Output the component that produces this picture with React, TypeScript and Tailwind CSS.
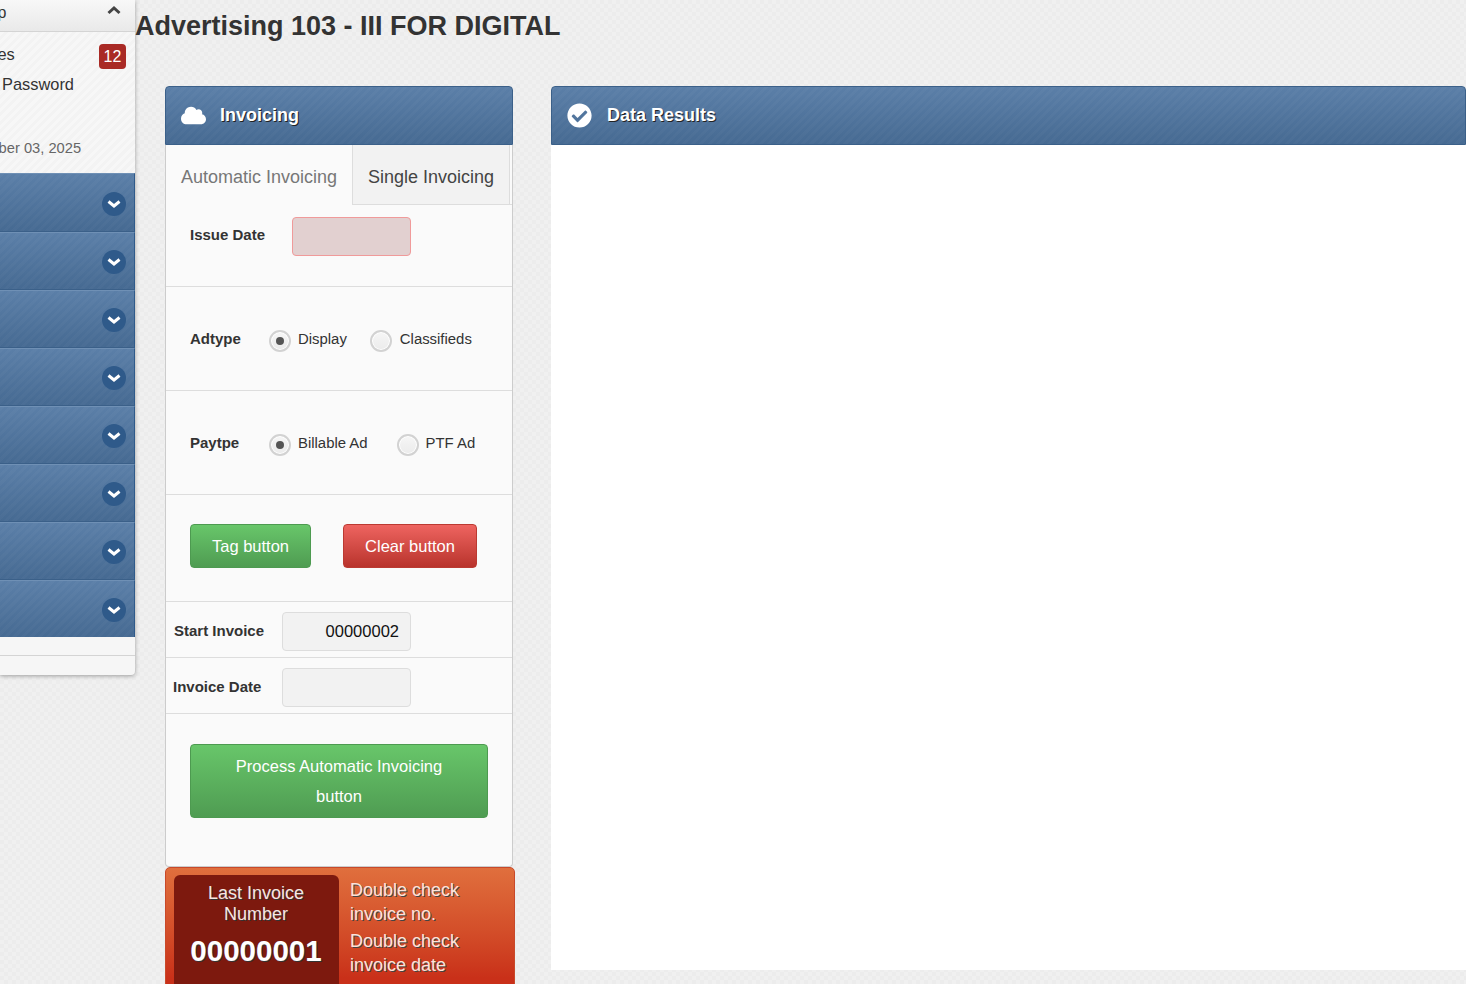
import { FaCloud, FaCheckCircle } from "react-icons/fa";

const stripes =
  "bg-[image:repeating-linear-gradient(135deg,rgba(255,255,255,0.025)_0,rgba(255,255,255,0.025)_3px,transparent_3px,transparent_6px),linear-gradient(180deg,#5b7fa8,#466a92)]";

function Chevron({ up = false, className = "" }: { up?: boolean; className?: string }) {
  return (
    <svg width="14" height="10" viewBox="0 0 14 10" className={className}>
      <polyline
        points={up ? "1.5,8 7,3 12.5,8" : "1.5,2.5 7,7 12.5,2.5"}
        fill="none"
        stroke="currentColor"
        strokeWidth="3"
      />
    </svg>
  );
}

function Radio({ checked = false }: { checked?: boolean }) {
  return (
    <span className="flex h-[22px] w-[22px] shrink-0 items-center justify-center rounded-full border-2 border-[#d2d2d2] bg-gradient-to-b from-[#f6f6f6] to-[#ebebeb] shadow-[inset_0_0_0_1px_#fff]">
      {checked && <span className="h-2 w-2 rounded-full bg-[#555]" />}
    </span>
  );
}

function RadioRow({
  label,
  a,
  b,
  gap,
  labelGap,
}: {
  label: string;
  a: string;
  b: string;
  gap: string;
  labelGap: string;
}) {
  return (
    <div className="flex h-[104px] items-start border-b border-[#ddd] pl-6 pt-[44px] text-[14.9px] text-[#333]">
      <span className="mt-[-1px] w-[79px] text-[15px] font-bold leading-[17px]">{label}</span>
      <span className="flex items-start">
        <span className="mt-[-1px]">
          <Radio checked />
        </span>
        <span className="ml-[7px] leading-[17px]">{a}</span>
      </span>
      <span className={`flex items-start ${gap}`}>
        <span className="mt-[-1px]">
          <Radio />
        </span>
        <span className={`${labelGap} leading-[17px]`}>{b}</span>
      </span>
    </div>
  );
}

function NavItem() {
  return (
    <div
      className={`flex h-[58px] items-start justify-end border-t border-t-[#6f90b5] border-b border-b-[#3b6089] border-r border-r-[#2f5a8a] pr-[8px] pt-[17px] first:h-[59px] first:pt-[18px] last:h-[57px] last:border-b-0 ${stripes}`}
    >
      <span className="flex h-6 w-6 items-center justify-center rounded-full bg-[#2f5a8a] text-white">
        <Chevron />
      </span>
    </div>
  );
}

function PanelHeader({
  icon,
  title,
  titleGap,
}: {
  icon: React.ReactNode;
  title: string;
  titleGap: string;
}) {
  return (
    <div
      className={`flex h-[59px] items-center rounded-t-[4px] border border-[#3b6089] pl-[15px] ${stripes}`}
    >
      <span className="flex w-[25px] justify-center text-white">{icon}</span>
      <span
        className={`mb-[2px] ${titleGap} text-[18px] font-bold leading-none text-white [text-shadow:1px_1px_0_#222]`}
      >
        {title}
      </span>
    </div>
  );
}

export default function App() {
  return (
    <div className="flex h-[984px] w-[1466px] overflow-hidden bg-[#eeeeee] bg-[image:conic-gradient(#f0f0f0_25%,#ececec_0_50%,#f0f0f0_0_75%,#ececec_0)] bg-[length:8px_8px] font-['Liberation_Sans',Arial,sans-serif] text-[#333]">
      <aside className="h-[675px] w-[135px] shrink-0 overflow-hidden rounded-br-[4px] bg-[#f6f6f6] shadow-[0_1px_4px_rgba(0,0,0,0.35)]">
        <div className="flex h-[32px] items-start justify-between border-b border-[#d4d4d4] bg-gradient-to-b from-[#f8f8f8] to-[#e9e9e9] pr-[14px]">
          <span className="ml-[-14px] text-[16px] leading-[26px] text-[#333]">Up</span>
          <Chevron up className="mt-[5px] text-[#444]" />
        </div>
        <div className="relative h-[141px] overflow-hidden bg-[image:repeating-linear-gradient(135deg,#f7f7f7_0,#f7f7f7_3px,#f3f3f3_3px,#f3f3f3_6px)] text-[16.4px] text-[#333]">
          <div className="ml-[-28px] mt-[11px] leading-[22px]">Notes</div>
          <span className="absolute right-[9px] top-[12px] flex h-[25px] w-[27px] items-center justify-center rounded-[4px] bg-[#a92a25] text-[16px] text-white">
            12
          </span>
          <div className="ml-[2px] mt-[8px] whitespace-nowrap leading-[22px]">Password</div>
          <div className="ml-[-52px] mt-[44px] whitespace-nowrap text-[14.7px] leading-[18px] text-[#666]">
            September 03, 2025
          </div>
        </div>
        <nav>
          {Array.from({ length: 8 }).map((_, i) => (
            <NavItem key={i} />
          ))}
        </nav>
        <div className="h-[19px] border-b border-[#d4d4d4]" />
      </aside>

      <main className="min-w-0 flex-1">
        <h1 className="h-[86px] pt-[10px] text-[27px] font-bold leading-[32px] text-[#333]">
          Advertising 103 - III FOR DIGITAL
        </h1>
        <div className="ml-[30px] flex items-start">
          <section className="w-[348px] shrink-0">
            <PanelHeader icon={<FaCloud size={25} />} title="Invoicing" titleGap="ml-[14px]" />
            <div className="h-[722px] rounded-b-[4px] border-x border-b border-[#ccc] bg-[#fafafa]">
              <div className="flex h-[60px] items-stretch text-[18px]">
                <div className="flex w-[187px] items-center justify-center border-r border-[#ddd] pt-[4px] text-[#777]">
                  Automatic Invoicing
                </div>
                <div className="flex w-[157px] items-center justify-center border-r border-b border-[#ddd] bg-[#f2f2f2] pt-[6px] text-[#444]">
                  Single Invoicing
                </div>
                <div className="flex-1 border-b border-[#ddd]" />
              </div>
              <div className="flex h-[82px] items-start border-b border-[#ddd] pl-6 pt-[12px]">
                <span className="w-[102px] pt-[9px] text-[15px] font-bold leading-[17px]">Issue Date</span>
                <input
                  readOnly
                  aria-label="Issue Date"
                  className="h-[39px] w-[119px] rounded-[4px] border border-[#f09a9a] bg-[#e2d0d0]"
                />
              </div>
              <RadioRow label="Adtype" a="Display" b="Classifieds" gap="ml-[23px]" labelGap="ml-[8px]" />
              <RadioRow label="Paytpe" a="Billable Ad" b="PTF Ad" gap="ml-[29px]" labelGap="ml-[7px]" />
              <div className="flex h-[107px] items-start border-b border-[#ddd] pl-6 pt-[29px]">
                <button className="h-[44px] w-[121px] rounded-[4px] border border-[#4d9a50] bg-gradient-to-b from-[#68c66a] to-[#4f9c52] text-[16.5px] text-white">
                  Tag button
                </button>
                <button className="ml-[32px] h-[44px] w-[134px] rounded-[4px] border border-[#bb3a32] bg-gradient-to-b from-[#ee6460] to-[#b9332c] text-[16.5px] text-white">
                  Clear button
                </button>
              </div>
              <div className="flex h-[56px] items-start border-b border-[#ddd] pl-[8px] pt-[10px]">
                <span className="w-[108px] pt-[10px] text-[15px] font-bold leading-[17px]">Start Invoice</span>
                <input
                  readOnly
                  value="00000002"
                  className="h-[39px] w-[129px] rounded-[4px] border border-[#ddd] bg-[#f2f2f2] px-[11px] text-right text-[16.5px] text-[#111]"
                />
              </div>
              <div className="flex h-[56px] items-start border-b border-[#ddd] pl-[7px] pt-[10px]">
                <span className="w-[109px] pt-[10px] text-[15px] font-bold leading-[17px]">Invoice Date</span>
                <input
                  readOnly
                  aria-label="Invoice Date"
                  className="h-[39px] w-[129px] rounded-[4px] border border-[#ddd] bg-[#f2f2f2]"
                />
              </div>
              <div className="px-6 pt-[30px]">
                <button className="h-[74px] w-[298px] rounded-[4px] border border-[#4d9a50] bg-gradient-to-b from-[#68c66a] to-[#4f9c52] px-6 text-[16.5px] leading-[30px] text-white">
                  Process Automatic Invoicing button
                </button>
              </div>
            </div>
            <div className="flex h-[130px] w-[350px] rounded-t-[5px] border border-[#c8492a] bg-gradient-to-b from-[#e06f3d] to-[#c93019] to-[110px] pl-2 pt-[7px]">
              <div className="w-[165px] rounded-t-[6px] bg-[#7d190e] pr-[1px] pt-[8px] text-center text-white">
                <div className="text-[18px] leading-[21px] text-[#f6e6e2] [text-shadow:1px_1px_0_#333]">
                  Last Invoice
                  <br />
                  Number
                </div>
                <div className="mt-[8px] text-[29.5px] font-bold leading-[36px] [text-shadow:1px_1px_0_#333]">
                  00000001
                </div>
              </div>
              <div className="ml-[11px] w-[150px] pt-[3px] text-[18px] leading-[24px] text-[#fde3da] [text-shadow:1px_1px_0_#444]">
                <p>Double check invoice no.</p>
                <p className="mt-[3px]">Double check invoice date</p>
              </div>
            </div>
          </section>
          <section className="ml-[38px] flex h-[884px] min-w-0 flex-1 flex-col">
            <PanelHeader icon={<FaCheckCircle size={25} />} title="Data Results" titleGap="ml-[15px]" />
            <div className="flex-1 bg-white" />
          </section>
        </div>
      </main>
    </div>
  );
}
